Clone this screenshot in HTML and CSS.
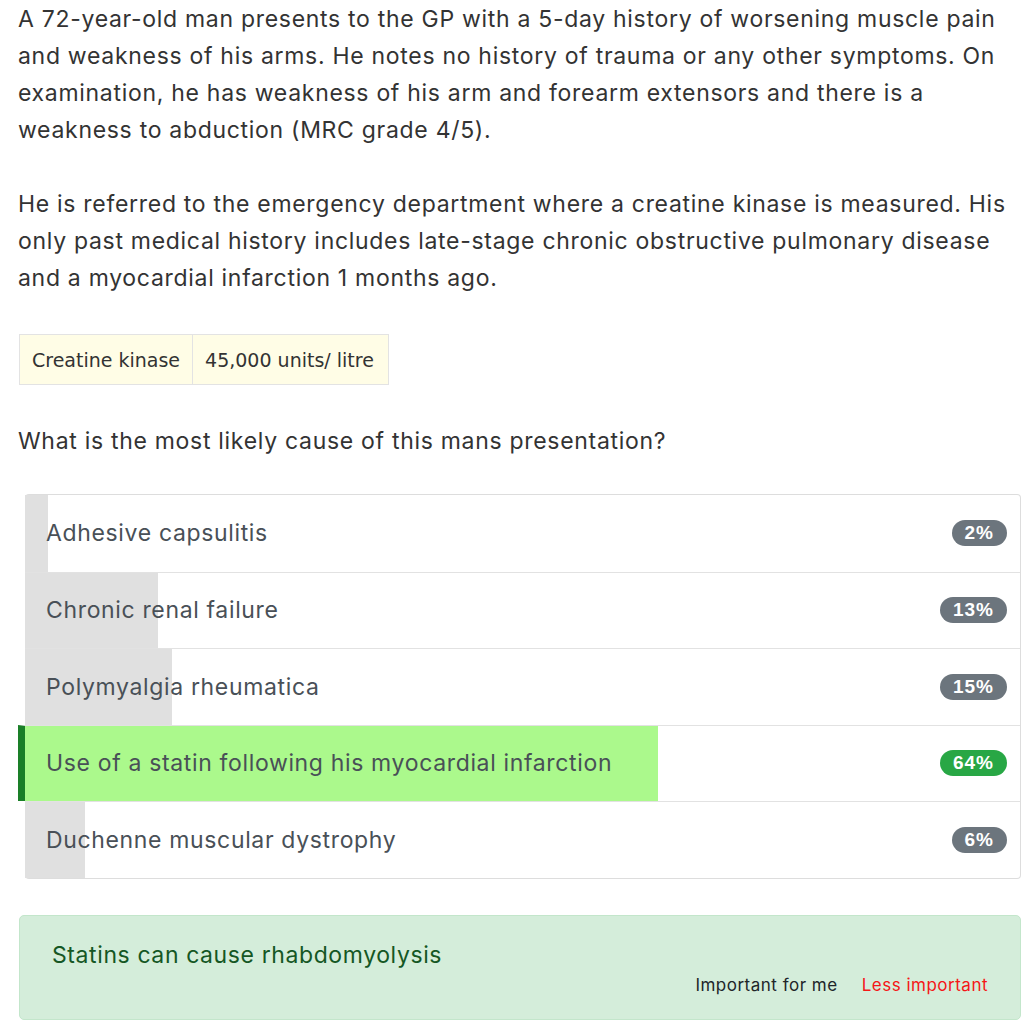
FILE: index.html
```html
<!DOCTYPE html>
<html lang="en">
<head>
<meta charset="utf-8">
<title>Question</title>
<link rel="stylesheet" href="styles.css">
</head>
<body>
<main class="page">
  <p class="stem">A 72-year-old man presents to the GP with a 5-day history of worsening muscle pain and weakness of his arms. He notes no history of trauma or any other symptoms. On examination, he has weakness of his arm and forearm extensors and there is a weakness to abduction (MRC grade 4/5).</p>
  <p class="stem">He is referred to the emergency department where a creatine kinase is measured. His only past medical history includes late-stage chronic obstructive pulmonary disease and a myocardial infarction 1 months ago.</p>

  <table class="labs">
    <tr><td>Creatine kinase</td><td>45,000 units/ litre</td></tr>
  </table>

  <p class="question">What is the most likely cause of this mans presentation?</p>

  <ul class="options">
    <li class="option"><span class="fill" style="width:2.3%"></span><span class="label">Adhesive capsulitis</span><span class="badge">2%</span></li>
    <li class="option"><span class="fill" style="width:13.4%"></span><span class="label">Chronic renal failure</span><span class="badge">13%</span></li>
    <li class="option"><span class="fill" style="width:14.8%"></span><span class="label">Polymyalgia rheumatica</span><span class="badge">15%</span></li>
    <li class="option correct"><span class="fill" style="width:63.6%"></span><span class="label">Use of a statin following his myocardial infarction</span><span class="badge">64%</span></li>
    <li class="option"><span class="fill" style="width:6%"></span><span class="label">Duchenne muscular dystrophy</span><span class="badge">6%</span></li>
  </ul>

  <div class="feedback">
    <p class="point">Statins can cause rhabdomyolysis</p>
    <div class="actions">
      <a class="more">Important for me</a>
      <a class="less">Less important</a>
    </div>
  </div>
</main>
</body>
</html>
```

FILE: styles.css
```css
* { box-sizing: border-box; }
html, body { margin: 0; padding: 0; background: #fff; }
body {
  font-family: Inter, "Noto Sans", sans-serif;
  color: #333;
}
.page {
  width: 1021px;
  padding: 1px 0 0 18px;
}
.stem {
  margin: 0 0 37px;
  font-size: 23px;
  line-height: 37px;
  letter-spacing: 0.7px;
}
.labs {
  border-collapse: collapse;
  margin: 8px 0 0 1px;
  background: #fffde6;
  font-family: "DejaVu Sans", Verdana, sans-serif;
  font-size: 19px;
  color: #333;
}
.labs td {
  border: 1px solid #e3e3e3;
  height: 50px;
  padding: 0 12px 0 12px;
}
.labs td + td { padding-right: 14px; }
.question {
  margin: 38px 0 0;
  font-size: 23px;
  line-height: 37px;
  letter-spacing: 0.7px;
}
.options {
  list-style: none;
  margin: 34px 0 0 7px;
  padding: 0;
  border: 1px solid #ddd;
  border-left: 0;
  border-radius: 4px;
}
.option {
  position: relative;
  display: flex;
  align-items: center;
  justify-content: space-between;
  height: 76.5px;
  padding: 0 13px 0 21px;
  border-top: 1px solid #e2e2e2;
  color: #495057;
  font-size: 23px;
  letter-spacing: 0.65px;
}
.option:first-child { border-top: 0; }
.fill {
  position: absolute;
  left: 0;
  top: 0;
  bottom: 0;
  min-width: 23px;
  background: #e0e0e0;
}
.label, .badge { position: relative; }
.badge {
  background: #6c757d;
  color: #fff;
  font-family: "Liberation Sans", Arial, sans-serif;
  font-weight: bold;
  font-size: 19px;
  line-height: 26px;
  padding: 0 13px;
  border-radius: 13px;
  letter-spacing: 1px;
}
.option.correct {
  margin-left: -7px;
  border-left: 7px solid #1a7f28;
}
.option.correct .fill { background: #abf98c; }
.option.correct .badge { background: #28a745; }
.feedback {
  margin: 36px 0 0 1px;
  background: #d4edda;
  border: 1px solid #c3e6cb;
  border-radius: 5px;
  padding: 21px 32px 22px 32px;
}
.point {
  margin: 0;
  font-size: 23px;
  line-height: 36px;
  color: #155724;
  letter-spacing: 0.6px;
}
.actions {
  display: flex;
  justify-content: flex-end;
  gap: 24px;
  font-size: 17px;
  line-height: 24px;
  letter-spacing: 0.5px;
}
.actions .more { color: #212529; }
.actions .less { color: #f51717; }
```
